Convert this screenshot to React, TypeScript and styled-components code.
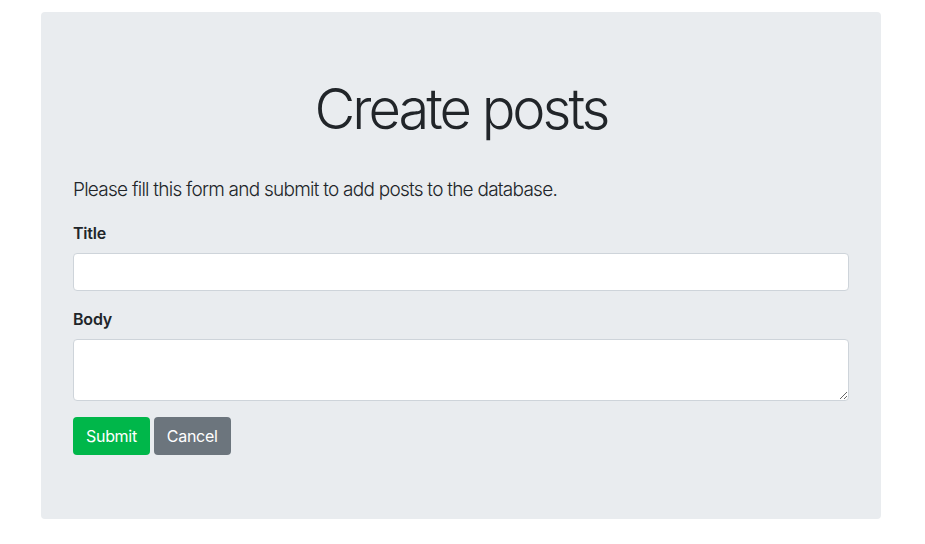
import styled, { createGlobalStyle } from "styled-components";

const GlobalStyle = createGlobalStyle`
  * {
    box-sizing: border-box;
  }

  body {
    margin: 0;
    background: #ffffff;
    color: #212529;
    font-family: Inter, "Noto Sans", sans-serif;
    font-size: 16px;
    line-height: 1.5;
  }
`;

const Page = styled.div`
  padding: 12px 0 0 41px;
`;

const Jumbotron = styled.div`
  width: 840px;
  padding: 64px 32px;
  background: #e9ecef;
  border-radius: 4px;
`;

const Heading = styled.h1`
  margin: 0 0 32px;
  font-size: 56px;
  font-weight: 300;
  line-height: 1.2;
  text-align: center;
  letter-spacing: -3px;
`;

const Lead = styled.p`
  margin: 0 0 16px;
  font-size: 19px;
  font-weight: 300;
  line-height: 30px;
  letter-spacing: -0.75px;
`;

const FormGroup = styled.div`
  margin-bottom: 16px;
`;

const Label = styled.label`
  display: block;
  margin-bottom: 8px;
  font-weight: 600;
  line-height: 24px;
  letter-spacing: -0.2px;
`;

const Input = styled.input`
  display: block;
  width: 100%;
  height: 38px;
  padding: 6px 12px;
  border: 1px solid #ced4da;
  border-radius: 4px;
  background: #ffffff;
  font: inherit;
  color: #495057;
`;

const TextArea = styled.textarea`
  display: block;
  width: 100%;
  height: 62px;
  padding: 6px 12px;
  border: 1px solid #ced4da;
  border-radius: 4px;
  background: #ffffff;
  font: inherit;
  color: #495057;
`;

const Actions = styled.div`
  display: flex;
  gap: 4px;
`;

const Button = styled.button<{ $variant: "success" | "secondary" }>`
  height: 38px;
  padding: 6px 12px;
  border: 1px solid transparent;
  border-radius: 4px;
  background: ${(p) => (p.$variant === "success" ? "#00b74a" : "#6c757d")};
  color: #ffffff;
  font: inherit;
  line-height: 24px;
  letter-spacing: -0.3px;
  cursor: pointer;
`;

export default function App() {
  return (
    <>
      <GlobalStyle />
      <Page>
        <Jumbotron>
          <Heading>Create posts</Heading>
          <Lead>Please fill this form and submit to add posts to the database.</Lead>
          <form onSubmit={(e) => e.preventDefault()}>
            <FormGroup>
              <Label htmlFor="title">Title</Label>
              <Input id="title" type="text" />
            </FormGroup>
            <FormGroup>
              <Label htmlFor="body">Body</Label>
              <TextArea id="body" rows={2} />
            </FormGroup>
            <Actions>
              <Button type="submit" $variant="success">Submit</Button>
              <Button type="button" $variant="secondary">Cancel</Button>
            </Actions>
          </form>
        </Jumbotron>
      </Page>
    </>
  );
}
